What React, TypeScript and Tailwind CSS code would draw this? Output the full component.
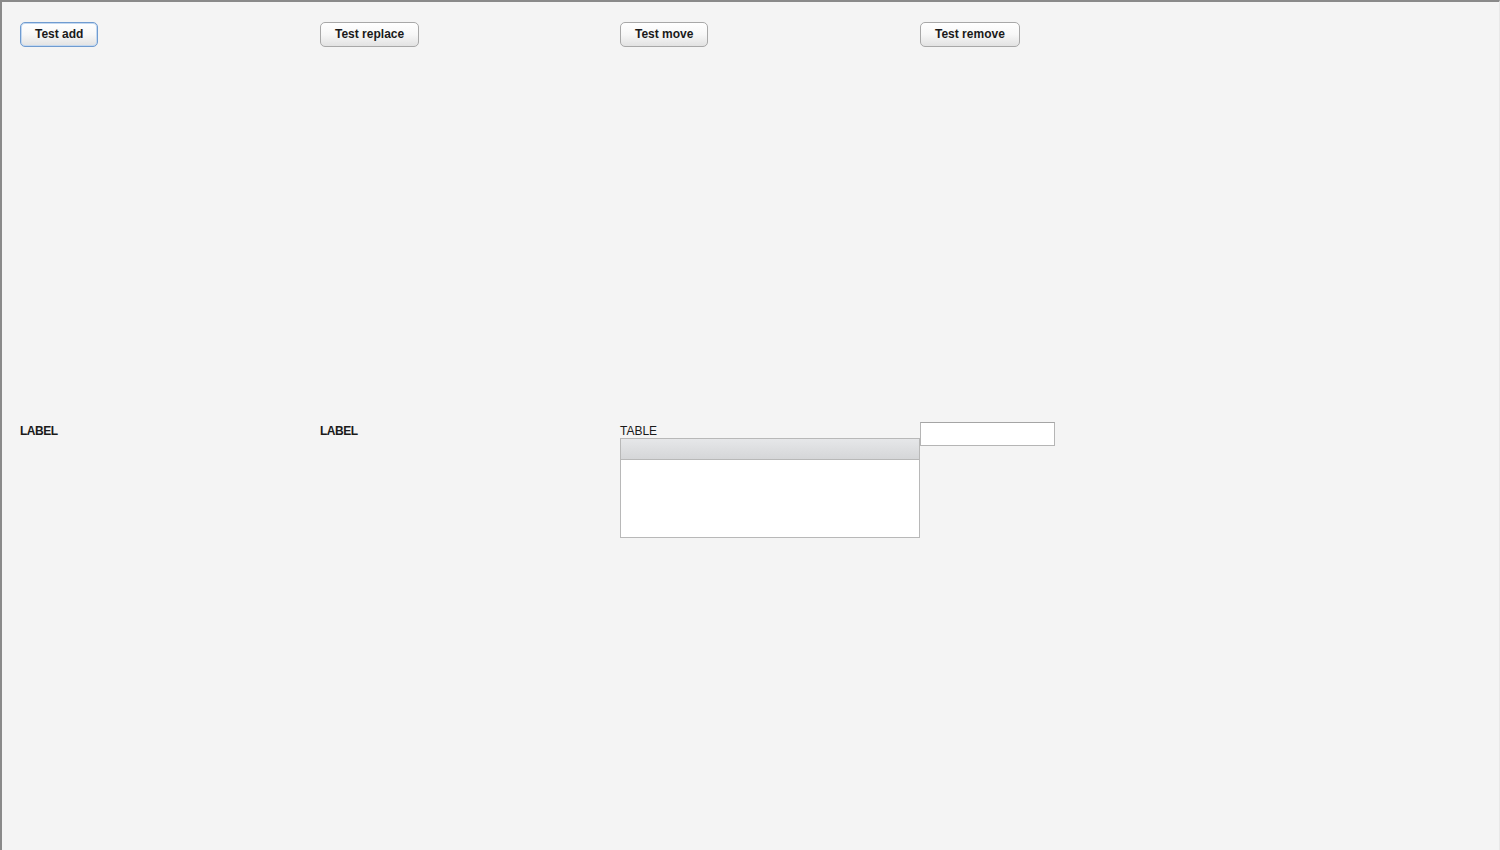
const buttons = ["Test add", "Test replace", "Test move", "Test remove"];

function SwingButton({ label, focused }: { label: string; focused?: boolean }) {
  return (
    <button
      className={`h-[25px] rounded-[5px] border bg-gradient-to-b from-white via-[#f7f7f7] to-[#e2e2e2] px-[14px] pb-[1px] text-[12px] font-bold leading-none text-[#1a1a1a] ${
        focused ? "border-[#6f9bd0] shadow-[inset_0_0_0_1px_#c3d8f0]" : "border-[#a8a8a8]"
      }`}
    >
      {label}
    </button>
  );
}

export default function App() {
  return (
    <div
      className="h-[850px] w-[1500px] overflow-hidden border-l-2 border-t-2 border-l-[#8a8a8a] border-t-[#8a8a8a] border-r border-r-[#e8e8e8] bg-[#f4f4f4] pl-[18px] pt-5"
      style={{ fontFamily: '"Liberation Sans", Arial, sans-serif' }}
    >
      <div className="grid grid-cols-[300px_300px_300px_300px] grid-rows-[400px_auto]">
        {buttons.map((b, i) => (
          <div key={b} className="flex items-start">
            <SwingButton label={b} focused={i === 0} />
          </div>
        ))}

        <div className="pt-[2px] text-[12px] font-bold leading-[15px] tracking-[-0.5px] text-[#1a1a1a]">LABEL</div>
        <div className="pt-[2px] text-[12px] font-bold leading-[15px] tracking-[-0.5px] text-[#1a1a1a]">LABEL</div>
        <div>
          <div className="pt-[2px] text-[12px] leading-[14px] text-[#1a1a1a]">TABLE</div>
          <div className="h-[100px] w-[300px] border border-[#b8b8b8] bg-white">
            <div className="h-[21px] border-b border-[#b8b8b8] bg-gradient-to-b from-[#e6e7e9] to-[#d5d6d8]" />
          </div>
        </div>
        <div>
          <div className="h-[24px] w-[135px] border border-[#b5b5b5] border-t-[#a5a5a5] bg-white" />
        </div>
      </div>
    </div>
  );
}
